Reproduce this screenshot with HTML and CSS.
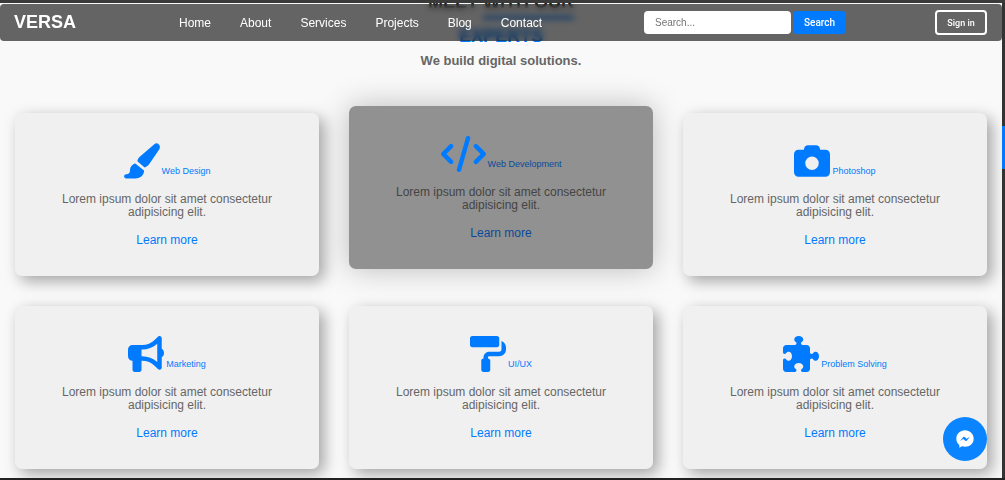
FILE: index.html
```html
<!DOCTYPE html>
<html lang="en">
<head>
    <meta charset="UTF-8">
    <meta name="viewport" content="width=device-width, initial-scale=1.0">
    <title>Versa</title>
    <link rel="stylesheet" href="styles.css">
</head>
<body>
    <header class="navbar">
        <a href="#" class="logo">VERSA</a>
        <nav class="nav-links">
            <a href="#home">Home</a>
            <a href="#about">About</a>
            <a href="#services">Services</a>
            <a href="#projects">Projects</a>
            <a href="#blog">Blog</a>
            <a href="#contact">Contact</a>
        </nav>
        <form class="search">
            <input type="text" placeholder="Search..." aria-label="Search">
            <button type="button">Search</button>
        </form>
        <button type="button" class="sign-in">Sign in</button>
    </header>

    <main id="services">
        <div class="heading">
            <h1>MEET <span class="underlined">WITH OUR</span><br><span class="blue">EXPERTS</span></h1>
            <h2>We build digital solutions.</h2>
        </div>

        <div class="cards">
            <div class="card">
                <div class="card-title">
                    <svg class="icon" viewBox="0 0 108 107"><path d="M104 3c4 4 5 10 2 15L77 61c-4 6-9 10-15 12L40 54c1-6 4-11 9-15L91 3c4-4 9-4 13 0z"/><path d="M34 61l26 21c1 14-12 24-26 24H7c-9 0-9-13 0-13 7 0 11-4 11-11 0-10 6-19 16-21z"/></svg>
                    <span>Web Design</span>
                </div>
                <p>Lorem ipsum dolor sit amet consectetur adipisicing elit.</p>
                <a href="#">Learn more</a>
            </div>
            <div class="card active">
                <div class="card-title">
                    <svg class="icon wide" viewBox="0 0 640 512"><path d="M392.8 1.2c-17-4.9-34.7 5-39.6 22l-128 448c-4.9 17 5 34.7 22 39.6s34.7-5 39.6-22l128-448c4.9-17-5-34.7-22-39.6zm80.6 120.1c-12.5 12.5-12.5 32.8 0 45.3L562.7 256l-89.4 89.4c-12.5 12.5-12.5 32.8 0 45.3s32.8 12.5 45.3 0l112-112c12.5-12.5 12.5-32.8 0-45.3l-112-112c-12.5-12.5-32.8-12.5-45.3 0zm-306.7 0c-12.5-12.5-32.8-12.5-45.3 0l-112 112c-12.5 12.5-12.5 32.8 0 45.3l112 112c12.5 12.5 32.8 12.5 45.3 0s12.5-32.8 0-45.3L77.3 256l89.4-89.4c12.5-12.5 12.5-32.8 0-45.3z"/></svg>
                    <span>Web Development</span>
                </div>
                <p>Lorem ipsum dolor sit amet consectetur adipisicing elit.</p>
                <a href="#">Learn more</a>
            </div>
            <div class="card">
                <div class="card-title">
                    <svg class="icon" viewBox="0 0 512 512"><path d="M149.1 64.8L138.7 96H64C28.7 96 0 124.7 0 160V416c0 35.3 28.7 64 64 64H448c35.3 0 64-28.7 64-64V160c0-35.3-28.7-64-64-64H373.3L362.9 64.8C356.4 45.2 338.1 32 317.4 32H194.6c-20.7 0-39 13.2-45.5 32.8zM256 192a96 96 0 1 1 0 192 96 96 0 1 1 0-192z"/></svg>
                    <span>Photoshop</span>
                </div>
                <p>Lorem ipsum dolor sit amet consectetur adipisicing elit.</p>
                <a href="#">Learn more</a>
            </div>
            <div class="card">
                <div class="card-title">
                    <svg class="icon" viewBox="0 0 512 512"><path d="M480 32c0-12.9-7.8-24.6-19.8-29.6s-25.7-2.2-34.9 6.9L381.7 53c-48 48-113.1 75-181 75H192 160 64c-35.3 0-64 28.7-64 64v96c0 35.3 28.7 64 64 64l0 128c0 17.7 14.3 32 32 32h64c17.7 0 32-14.3 32-32V352l8.7 0c67.9 0 133 27 181 75l43.6 43.6c9.2 9.2 22.9 11.9 34.9 6.9s19.8-16.6 19.8-29.6V300.4c18.6-8.8 32-32.5 32-60.4s-13.4-51.6-32-60.4V32zm-64 76.7V240 371.3C357.2 317.8 280.5 288 200.7 288H192V192h8.7c79.8 0 156.5-29.8 215.3-83.3z"/></svg>
                    <span>Marketing</span>
                </div>
                <p>Lorem ipsum dolor sit amet consectetur adipisicing elit.</p>
                <a href="#">Learn more</a>
            </div>
            <div class="card">
                <div class="card-title">
                    <svg class="icon" viewBox="0 0 512 512"><path d="M0 32C0 14.3 14.3 0 32 0H384c17.7 0 32 14.3 32 32v96c0 17.7-14.3 32-32 32H32c-17.7 0-32-14.3-32-32V32zM160 352c0-17.7 14.3-32 32-32V304c0-44.2 35.8-80 80-80H416c17.7 0 32-14.3 32-32V69.5c37.3 13.2 64 48.7 64 90.500v32c0 53-43 96-96 96H272c-8.800 0-16 7.200-16 16v16c17.700 0 32 14.300 32 32V480c0 17.700-14.300 32-32 32H192c-17.700 0-32-14.300-32-32V352z"/></svg>
                    <span>UI/UX</span>
                </div>
                <p>Lorem ipsum dolor sit amet consectetur adipisicing elit.</p>
                <a href="#">Learn more</a>
            </div>
            <div class="card">
                <div class="card-title">
                    <svg class="icon" viewBox="0 0 512 512"><path d="M192 104.8c0-9.2-5.8-17.3-13.2-22.8C167.2 73.3 160 61.3 160 48c0-26.5 28.7-48 64-48s64 21.5 64 48c0 13.3-7.2 25.3-18.8 34c-7.4 5.5-13.2 13.6-13.2 22.8v0c0 12.8 10.4 23.2 23.2 23.2H336c26.5 0 48 21.5 48 48v56.8c0 12.8 10.4 23.2 23.2 23.2v0c9.2 0 17.3-5.8 22.8-13.2c8.7-11.6 20.7-18.8 34-18.8c26.5 0 48 28.7 48 64s-21.5 64-48 64c-13.3 0-25.3-7.2-34-18.8c-5.5-7.4-13.6-13.2-22.8-13.2v0c-12.8 0-23.2 10.4-23.2 23.2V464c0 26.5-21.5 48-48 48H279.2c-12.8 0-23.2-10.4-23.2-23.2v0c0-9.2 5.8-17.3 13.2-22.8c11.6-8.7 18.8-20.7 18.8-34c0-26.5-28.7-48-64-48s-64 21.5-64 48c0 13.3 7.2 25.3 18.8 34c7.4 5.5 13.2 13.6 13.2 22.8v0c0 12.8-10.4 23.2-23.2 23.2H48c-26.5 0-48-21.5-48-48V343.2C0 330.4 10.4 320 23.2 320v0c9.2 0 17.3 5.8 22.8 13.2C54.7 344.8 66.7 352 80 352c26.5 0 48-28.7 48-64s-21.5-64-48-64c-13.3 0-25.3 7.2-34 18.8C40.5 250.2 32.4 256 23.2 256v0C10.4 256 0 245.6 0 232.8V176c0-26.5 21.5-48 48-48H168.8c12.8 0 23.2-10.4 23.2-23.2v0z"/></svg>
                    <span>Problem Solving</span>
                </div>
                <p>Lorem ipsum dolor sit amet consectetur adipisicing elit.</p>
                <a href="#">Learn more</a>
            </div>
        </div>
    </main>

    <button type="button" class="messenger" aria-label="Open chat">
        <svg viewBox="0 0 54 54"><path fill="#fff" d="M27 1C12 1 1 12 1 26c0 8 3 14 9 19v8l8-4c3 1 6 1 9 1 15 0 26-10 26-24S42 1 27 1z"/><path fill="#0a84ff" d="M12 33l10-12c1-1 3-1 4 0l6 5 10-6-10 12c-1 1-3 1-4 0l-6-5z"/></svg>
    </button>

    <div class="top-edge"></div>
    <div class="scrollbar"><div class="thumb"></div></div>
    <div class="bottom-edge"></div>
</body>
</html>
```

FILE: styles.css
```css
* {
    box-sizing: border-box;
    margin: 0;
    padding: 0;
}
body {
    font-family: "Liberation Sans", Arial, sans-serif;
    font-size: 12px;
    background: #f9f9f9;
    color: #666;
    min-height: 100vh;
    overflow: hidden;
}
a {
    color: #007bff;
    text-decoration: none;
}

/* Navbar */
.navbar {
    position: fixed;
    top: 4px;
    left: 0;
    right: 3px;
    z-index: 10;
    display: grid;
    grid-template-columns: 165px 465px 1fr auto;
    align-items: center;
    padding: 6px 15px 6px 14px;
    border-radius: 4px;
    background: rgba(0, 0, 0, 0.6);
    backdrop-filter: blur(3px);
}
.logo {
    color: #fff;
    font-size: 18px;
    font-weight: bold;
}
.nav-links {
    display: flex;
    gap: 29px;
}
.nav-links a {
    color: #fff;
}
.search {
    display: flex;
    gap: 2px;
}
.search input {
    width: 147px;
    height: 23px;
    padding: 0 11px;
    border: none;
    border-radius: 4px;
    background: #fff;
    font-family: inherit;
    font-size: 10px;
}
.search button {
    width: 53px;
    border: none;
    border-radius: 4px;
    background: #007bff;
    color: #fff;
    font-family: Roboto, sans-serif;
    font-size: 10px;
    font-weight: 500;
}
.sign-in {
    width: 52px;
    height: 25px;
    border: 2px solid #fff;
    border-radius: 4px;
    background: none;
    color: #fff;
    font-family: Roboto, sans-serif;
    font-size: 9px;
    font-weight: 500;
}

/* Services */
main {
    padding: 0 18px 11px 15px;
}
.heading {
    margin-top: -15px;
    margin-bottom: 44px;
    text-align: center;
}
.heading h1 {
    font-size: 18px;
    line-height: 34px;
    color: #222;
}
.underlined {
    padding-bottom: 4px;
    border-bottom: 3px solid #007bff;
}
.blue {
    color: #007bff;
}
.heading h2 {
    font-size: 13px;
    line-height: 16px;
}
.cards {
    display: grid;
    grid-template-columns: repeat(3, 1fr);
    gap: 30px;
}
.card {
    padding: 30px 30px 29px;
    border-radius: 7px;
    background: #f0f0f0;
    box-shadow: 5px 5px 15px rgba(0, 0, 0, 0.35);
    text-align: center;
    line-height: 13px;
}
.card.active {
    background: #919191;
    box-shadow: 0 0 30px rgba(0, 0, 0, 0.25);
    transform: translateY(-7px);
}
.card-title {
    display: flex;
    justify-content: center;
    align-items: flex-end;
    gap: 2px;
    color: #007bff;
    font-size: 9px;
    line-height: 16px;
}
.icon {
    width: 36px;
    height: 36px;
    fill: #007bff;
}
.icon.wide {
    width: 45px;
}
.card p {
    margin: 14px 0 15px;
}
.card a {
    display: block;
}
.active p {
    color: #444;
}
.active a,
.active span {
    color: #0a4a9a;
}

/* Chat button */
.messenger {
    position: fixed;
    right: 18px;
    bottom: 19px;
    display: flex;
    justify-content: center;
    align-items: center;
    width: 44px;
    height: 44px;
    border: none;
    border-radius: 50%;
    background: #0a84ff;
}
.messenger svg {
    width: 18px;
    height: 18px;
}

/* Window edges and scrollbar */
.top-edge,
.bottom-edge {
    position: fixed;
    left: 0;
    right: 0;
    z-index: 20;
    background: #3a3a3a;
}
.top-edge {
    top: 0;
    height: 3px;
}
.bottom-edge {
    bottom: 0;
    height: 2px;
    background: #222;
}
.scrollbar {
    position: fixed;
    top: 0;
    right: 0;
    bottom: 0;
    width: 3px;
    padding-top: 126px;
    background: #333;
}
.thumb {
    height: 43px;
    background: #007bff;
}
```
